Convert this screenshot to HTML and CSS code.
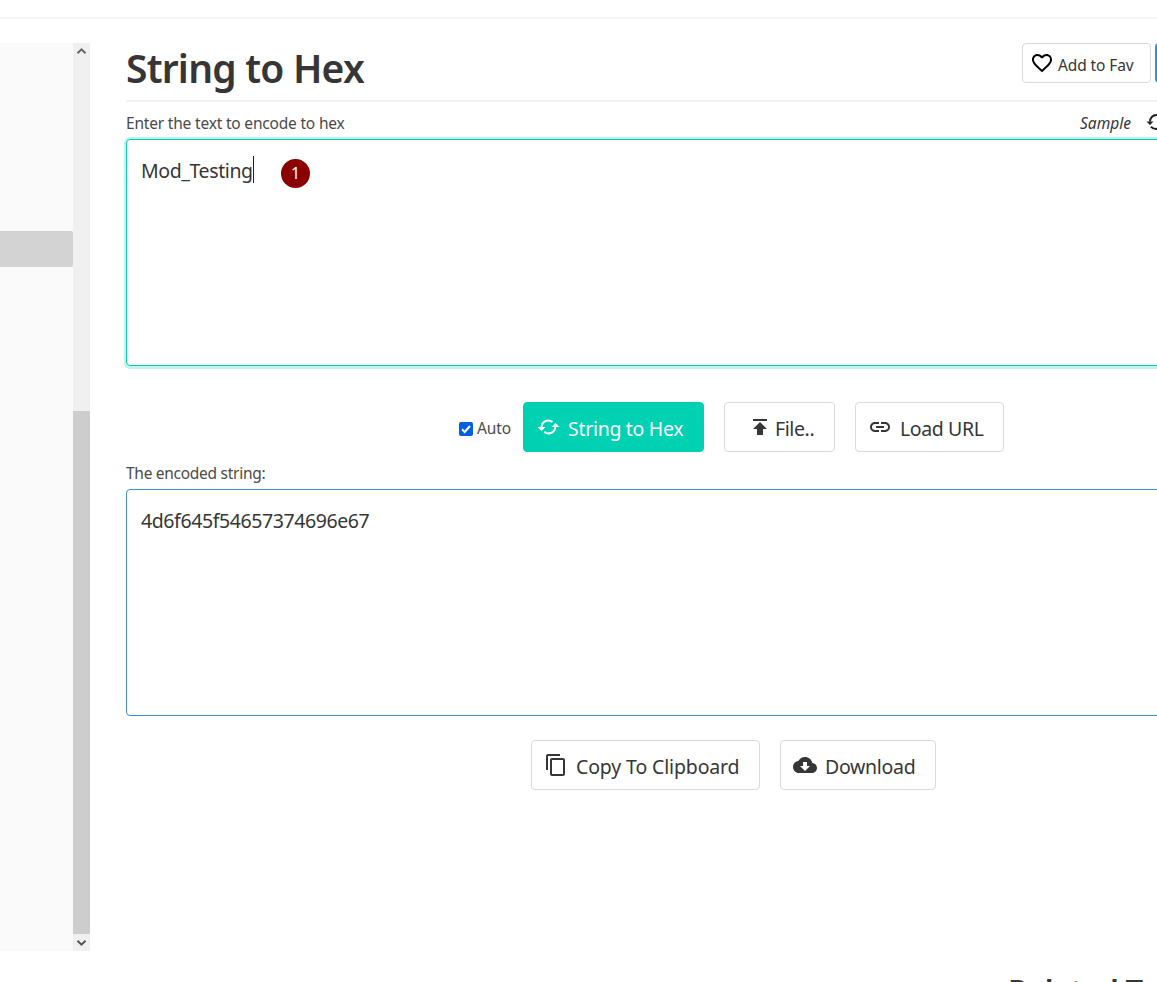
FILE: index.html
```html
<!DOCTYPE html>
<html lang="en">
<head>
<meta charset="utf-8">
<title>String to Hex</title>
<link rel="stylesheet" href="styles.css">
</head>
<body>
<header class="topbar"></header>
<div class="layout">
  <aside class="sidebar">
    <nav class="menu"><div class="menu-active"></div></nav>
    <div class="scrollbar">
      <svg class="arrow" viewBox="0 0 17 17"><path d="M4.500 10.300 8.500 6.300l4 4" fill="none" stroke="#666" stroke-width="2"/></svg>
      <div class="thumb"></div>
      <svg class="arrow" viewBox="0 0 17 17"><path d="m4.500 6.700 4 4 4-4" fill="none" stroke="#555" stroke-width="2"/></svg>
    </div>
  </aside>
  <main class="main">
    <div class="heading">
      <h1 class="title"><span>String to Hex</span></h1>
      <button class="fav"><svg width="24" height="24" viewBox="0 0 24 24"><path d="M16.5 3c-1.74 0-3.41.81-4.5 2.09C10.91 3.81 9.24 3 7.5 3 4.42 3 2 5.42 2 8.5c0 3.78 3.4 6.86 8.55 11.54L12 21.35l1.45-1.32C18.6 15.36 22 12.28 22 8.5 22 5.42 19.58 3 16.5 3zm-4.4 15.55-.1.1-.1-.1C7.14 14.24 4 11.39 4 8.5 4 6.5 5.5 5 7.5 5c1.54 0 3.04.99 3.57 2.36h1.87C13.46 5.99 14.96 5 16.5 5c2 0 3.5 1.5 3.5 3.5 0 2.89-3.14 5.74-7.9 10.05z"/></svg><span class="fav-text">Add to Fav</span></button>
      <div class="share"></div>
    </div>
    <div class="label-row">
      <span class="label label-input">Enter the text to encode to hex</span>
      <span class="sample">Sample</span>
      <svg class="reload" width="24" height="24" viewBox="0 0 24 24" fill="none" stroke="#222" stroke-width="2"><path d="M6 11.500C6 8 8.700 5 12.300 5c2 0 3.700.8 4.900 2.200M18 12.500c0 3.600-2.700 6.500-6.200 6.500-2 0-3.800-.9-4.900-2.300"/><path d="M2.500 11.500h7L6 15zM14.500 12.500h7L18 9z" fill="#222" stroke="none"/></svg>
    </div>
    <div class="box box-focus"><span class="value value-input">Mod_Testing</span><span class="caret"></span><span class="step">1</span></div>
    <div class="actions">
      <label class="auto"><svg width="14" height="14" viewBox="0 0 14 14"><rect width="14" height="14" rx="2" fill="#0060df"/><path d="m3 7.300 2.700 2.700L11 4" fill="none" stroke="#fff" stroke-width="2"/></svg><span class="auto-text">Auto</span></label>
      <button class="btn primary"><svg width="24" height="24" viewBox="0 0 24 24" fill="none" stroke="#fff" stroke-width="2"><path d="M5.500 12c.2-3.700 3-6.600 6.800-6.600 1.700 0 3.100.6 4.200 1.600M19.500 11.500c-.2 3.900-3 7-6.800 7-1.800 0-3.300-.7-4.400-1.800"/><path d="M1.500 12h8l-4 4zM15.500 12h8l-4-4z" fill="#fff" stroke="none"/></svg><span class="t-hex">String to Hex</span></button>
      <button class="btn file"><svg width="24" height="24" viewBox="0 0 24 24" fill="#363636"><path d="M5 4h14v2H5zm0 10h4v6h6v-6h4l-7-7z"/></svg><span class="t-file">File..</span></button>
      <button class="btn url"><svg width="24" height="24" viewBox="0 0 24 24" fill="#363636"><path d="M3.900 12c0-1.710 1.390-3.100 3.100-3.100h4V7H7c-2.760 0-5 2.240-5 5s2.240 5 5 5h4v-1.900H7c-1.710 0-3.100-1.390-3.100-3.100zM8 13h8v-2H8v2zm9-6h-4v1.900h4c1.710 0 3.100 1.390 3.100 3.100s-1.390 3.100-3.100 3.100h-4V17h4c2.760 0 5-2.240 5-5s-2.240-5-5-5z"/></svg><span class="t-url">Load URL</span></button>
    </div>
    <div class="label-row second"><span class="label label-output">The encoded string:</span></div>
    <div class="box box-output"><span class="value value-output">4d6f645f54657374696e67</span></div>
    <div class="actions bottom">
      <button class="btn copy"><svg width="24" height="24" viewBox="0 0 24 24" fill="#363636"><path d="M16 1H4c-1.100 0-2 .9-2 2v14h2V3h12V1zm3 4H8c-1.100 0-2 .9-2 2v14c0 1.100.9 2 2 2h11c1.100 0 2-.9 2-2V7c0-1.100-.9-2-2-2zm0 16H8V7h11v14z"/></svg><span class="t-copy">Copy To Clipboard</span></button>
      <button class="btn download"><svg width="24" height="24" viewBox="0 0 24 24" fill="#363636"><path d="M19.350 10.040C18.670 6.590 15.640 4 12 4 9.110 4 6.600 5.640 5.350 8.040 2.340 8.360 0 10.910 0 14c0 3.310 2.690 6 6 6h13c2.760 0 5-2.240 5-5 0-2.640-2.050-4.780-4.650-4.960zM17 13l-5 5-5-5h3V9h4v4h3z"/></svg><span class="t-down">Download</span></button>
    </div>
    <h2 class="related">Related Tools</h2>
  </main>
</div>
</body>
</html>
```
FILE: styles.css
```css
* { box-sizing: border-box; }
body {
  margin: 0;
  width: 1157px;
  height: 982px;
  overflow: hidden;
  background: #fff;
  color: #363636;
  font-family: "Noto Sans", "Open Sans", sans-serif;
}
svg { display: block; flex: none; }
span { white-space: nowrap; }
.topbar { height: 19px; border-bottom: 2px solid #f3f3f3; }
.layout { display: flex; padding-top: 24px; height: 963px; overflow: hidden; }
.sidebar { display: flex; flex: none; width: 90px; height: 908px; background: #fafafa; }
.menu { width: 73px; padding-top: 188px; }
.menu-active { height: 36px; background: #d3d3d3; border-radius: 0 2px 2px 0; }
.scrollbar { display: flex; flex-direction: column; justify-content: space-between; width: 17px; background: #f0f0f0; }
.arrow { width: 17px; height: 17px; }
.thumb { height: 523px; margin-top: auto; background: #cdcdcd; }
.main { flex: none; width: 1200px; padding-left: 36px; }
.heading { display: flex; height: 59px; border-bottom: 2px solid #f3f3f3; }
.title { width: 896px; margin: 0; font-size: 39px; font-weight: 600; line-height: 50px; letter-spacing: -0.78px; }
.fav {
  display: flex; align-items: center; width: 129px; height: 40px; padding: 0 0 0 7px;
  border: 1px solid #dbdbdb; border-radius: 4px; background: #fff; color: #363636;
  font: 15.500px/24px "Noto Sans", sans-serif;
}
.fav-text { margin: 3px 0 0 4px; letter-spacing: -0.1px; }
.share { width: 60px; height: 40px; margin-left: 4px; border-radius: 4px; background: #3e8ed0; }
.label-row { display: flex; height: 37px; padding-top: 9px; line-height: 24px; color: #4a4a4a; }
.label { width: 954px; font-size: 15.500px; letter-spacing: -0.19px; }
.label-output { letter-spacing: -0.28px; }
.sample { width: 64px; font-size: 15.500px; font-style: italic; color: #363636; }
.reload { margin-top: -1px; }
.box { display: flex; height: 227px; padding: 15px 14px; border: 1px solid #3e8ed0; border-radius: 4px; font-size: 19.500px; line-height: 32px; }
.box-focus { border-color: #00d1b2; box-shadow: 0 0 0 2px #bff3ec, 0 1px 0 2px #bff3ec; }
.value-input { width: 112px; letter-spacing: -0.4px; }
.value-output { letter-spacing: -0.4px; }
.caret { width: 1px; height: 27px; margin-top: 1px; background: #222; }
.step { width: 29px; height: 29px; margin: 4px 0 0 27px; border-radius: 50%; background: #8b0000; color: #fff; font-size: 16px; line-height: 29px; text-align: center; }
.actions { display: flex; height: 50px; margin: 36px 0 0 333px; }
.auto { display: flex; align-items: center; width: 64px; padding-top: 3px; font-size: 15.500px; color: #4a4a4a; }
.auto-text { margin: -2px 0 0 4px; letter-spacing: -0.1px; }
.btn {
  display: flex; align-items: center; flex: none; height: 50px; padding: 0; border: 1px solid #dbdbdb; border-radius: 4px;
  background: #fff; color: #363636; font: 19.500px/30px "Noto Sans", sans-serif; letter-spacing: -0.3px;
}
.btn span { margin-top: 4px; }
.primary { width: 181px; padding-left: 12px; border-color: #00d1b2; background: #00d1b2; color: #fff; }
.primary span { margin-left: 8px; }
.file { width: 111px; margin-left: 20px; padding-left: 23px; }
.file span { margin-left: 3px; letter-spacing: -0.4px; }
.url { width: 149px; margin-left: 20px; padding-left: 12px; }
.url span { margin-left: 8px; letter-spacing: -0.38px; }
.bottom { margin: 24px 0 0 405px; }
.copy { width: 229px; padding-left: 12px; }
.copy span { margin-left: 8px; letter-spacing: -0.14px; }
.download { width: 156px; margin-left: 20px; padding-left: 12px; }
.download span { margin-left: 8px; }
.related { margin: 178px 0 0 882px; font-size: 31px; font-weight: 600; line-height: 44px; letter-spacing: -0.7px; white-space: nowrap; }
```
